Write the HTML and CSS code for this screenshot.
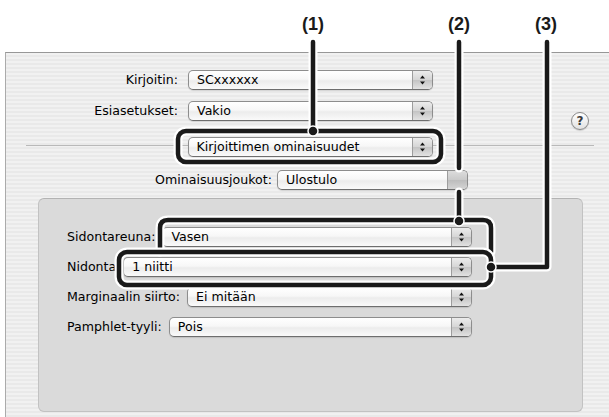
FILE: index.html
```html
<!DOCTYPE html>
<html lang="fi">
<head>
    <meta charset="UTF-8">
    <title>Kirjoittimen ominaisuudet</title>
    <link rel="stylesheet" href="styles.css">
</head>
<body>
<div class="page">

    <div class="marks">
        <span class="mark mark-1">(1)</span>
        <span class="mark mark-2">(2)</span>
        <span class="mark mark-3">(3)</span>
    </div>

    <div class="dialog">
        <div class="row row-top">
            <span class="label label-top">Kirjoitin:</span>
            <div class="popup popup-top">
                <span class="value">SCxxxxxx</span>
                <span class="arrows"><svg width="7" height="12" viewBox="0 0 7 12"><path d="M3.5 1.5 L6 4.5 H1 Z M3.5 10.5 L6 7.5 H1 Z" fill="#111"/></svg></span>
            </div>
        </div>

        <div class="row row-top row-preset">
            <span class="label label-top">Esiasetukset:</span>
            <div class="popup popup-top">
                <span class="value">Vakio</span>
                <span class="arrows"><svg width="7" height="12" viewBox="0 0 7 12"><path d="M3.5 1.5 L6 4.5 H1 Z M3.5 10.5 L6 7.5 H1 Z" fill="#111"/></svg></span>
            </div>
            <span class="help">?</span>
        </div>

        <div class="row row-pane">
            <span class="sep"></span>
            <div class="popup popup-top">
                <span class="value">Kirjoittimen ominaisuudet</span>
                <span class="arrows"><svg width="7" height="12" viewBox="0 0 7 12"><path d="M3.5 1.5 L6 4.5 H1 Z M3.5 10.5 L6 7.5 H1 Z" fill="#111"/></svg></span>
            </div>
            <span class="sep"></span>
        </div>

        <div class="row row-set">
            <span class="label label-set">Ominaisuusjoukot:</span>
            <div class="popup popup-set">
                <span class="value">Ulostulo</span>
                <span class="arrows arrows-blank"></span>
            </div>
        </div>

        <div class="group">
            <div class="row row-inner">
                <span class="label">Sidontareuna:</span>
                <div class="popup popup-inner">
                    <span class="value">Vasen</span>
                    <span class="arrows"><svg width="7" height="12" viewBox="0 0 7 12"><path d="M3.5 1.5 L6 4.5 H1 Z M3.5 10.5 L6 7.5 H1 Z" fill="#111"/></svg></span>
                </div>
            </div>
            <div class="row row-inner">
                <span class="label">Nidonta</span>
                <div class="popup popup-inner">
                    <span class="value">1 niitti</span>
                    <span class="arrows"><svg width="7" height="12" viewBox="0 0 7 12"><path d="M3.5 1.5 L6 4.5 H1 Z M3.5 10.5 L6 7.5 H1 Z" fill="#111"/></svg></span>
                </div>
            </div>
            <div class="row row-inner">
                <span class="label">Marginaalin siirto:</span>
                <div class="popup popup-inner">
                    <span class="value">Ei mitään</span>
                    <span class="arrows"><svg width="7" height="12" viewBox="0 0 7 12"><path d="M3.5 1.5 L6 4.5 H1 Z M3.5 10.5 L6 7.5 H1 Z" fill="#111"/></svg></span>
                </div>
            </div>
            <div class="row row-inner">
                <span class="label">Pamphlet-tyyli:</span>
                <div class="popup popup-inner">
                    <span class="value">Pois</span>
                    <span class="arrows"><svg width="7" height="12" viewBox="0 0 7 12"><path d="M3.5 1.5 L6 4.5 H1 Z M3.5 10.5 L6 7.5 H1 Z" fill="#111"/></svg></span>
                </div>
            </div>
        </div>
    </div>

    <!-- callout frames drawn over the dialog -->
    <svg class="callouts" width="609" height="417" viewBox="0 0 609 417">
        <g fill="none" stroke-linejoin="round" stroke-linecap="round">
            <!-- (1) -->
            <rect x="178" y="131" width="263" height="31" rx="8" stroke="#fff" stroke-width="9"/>
            <path d="M313 42 V131" stroke="#fff" stroke-width="9"/>
            <rect x="178" y="131" width="263" height="31" rx="8" stroke="#1a1a1a" stroke-width="4.5"/>
            <path d="M313 42 V131" stroke="#1a1a1a" stroke-width="4.5"/>

            <!-- (2) -->
            <path d="M160 252 V228 Q160 220 168 220 H483 Q491 220 491 228 V252" stroke="#fff" stroke-width="9"/>
            <path d="M459 42 V168 M459 192 V220" stroke="#fff" stroke-width="9"/>
            <path d="M160 252 V228 Q160 220 168 220 H483 Q491 220 491 228 V252" stroke="#1a1a1a" stroke-width="4.5"/>
            <path d="M459 42 V168 M459 192 V220" stroke="#1a1a1a" stroke-width="4.5"/>

            <!-- (3) -->
            <rect x="119" y="252" width="372" height="33" rx="8" stroke="#fff" stroke-width="9"/>
            <path d="M547 42 V267 H491" stroke="#fff" stroke-width="9"/>
            <rect x="119" y="252" width="372" height="33" rx="8" stroke="#1a1a1a" stroke-width="4.5"/>
            <path d="M547 42 V267 H491" stroke="#1a1a1a" stroke-width="4.5"/>
        </g>
        <g fill="#1a1a1a" stroke="#fff" stroke-width="1.5">
            <circle cx="313" cy="131" r="5"/>
            <circle cx="459" cy="221" r="5"/>
            <circle cx="491" cy="267" r="5"/>
        </g>
    </svg>

</div>
</body>
</html>
```

FILE: styles.css
```css
body {
    margin: 0;
    background: #ffffff;
    font-family: "DejaVu Sans", "Liberation Sans", sans-serif;
    font-size: 12.6px;
    color: #000000;
}
.page {
    position: relative;
    width: 609px;
    height: 417px;
    overflow: hidden;
}

/* callout numbers */
.marks {
    display: flex;
    height: 52px;
    box-sizing: border-box;
    padding: 14px 0 0 298px;
    font-family: "Liberation Sans", Arial, sans-serif;
    font-weight: bold;
    font-size: 18px;
    line-height: 20px;
    color: #1a1a1a;
}
.mark {
    width: 30px;
    text-align: center;
}
.mark-2 {
    margin-left: 116px;
}
.mark-3 {
    margin-left: 57px;
}
.callouts {
    position: absolute;
    left: 0;
    top: 0;
    pointer-events: none;
}

/* dialog sheet */
.dialog {
    margin-left: 5px;
    height: 365px;
    box-sizing: border-box;
    border-top: 1px solid #979797;
    border-left: 1px solid #ababab;
    padding-top: 17px;
    background: repeating-linear-gradient(to bottom, #f1f1f1 0, #f1f1f1 2px, #e9e9e9 2px, #e9e9e9 4px);
}
.row {
    display: flex;
    align-items: flex-start;
    height: 20px;
}
.label {
    line-height: 20px;
    white-space: nowrap;
}
.label-top {
    width: 172px;
    text-align: right;
    margin-right: 10px;
}
.row-preset {
    margin-top: 11px;
}
.row-pane {
    margin-top: 16px;
    padding: 0 15px 0 20px;
}
.sep {
    flex: 1;
    height: 1px;
    margin-top: 8px;
    background: #b9b9b9;
}
.row-set {
    margin-top: 13px;
}
.label-set {
    width: 266px;
    text-align: right;
    margin-right: 5px;
}
.help {
    margin: 11px 20px 0 auto;
    width: 18px;
    height: 18px;
    flex-shrink: 0;
    box-sizing: border-box;
    border: 1px solid #8a8a8a;
    border-radius: 50%;
    background: linear-gradient(#ffffff, #e2e2e2);
    box-shadow: 0 1px 1px rgba(0, 0, 0, 0.15);
    font-family: "DejaVu Sans", sans-serif;
    font-size: 12px;
    font-weight: bold;
    line-height: 16px;
    text-align: center;
    color: #3a3a3a;
}

/* pop-up buttons */
.popup {
    display: flex;
    height: 20px;
    box-sizing: border-box;
    border: 1px solid #8d8d8d;
    border-bottom-color: #6e6e6e;
    border-radius: 5px;
    background: linear-gradient(#ffffff 0%, #f7f7f7 45%, #ececec 55%, #fafafa 100%);
    box-shadow: 0 1px 1px rgba(0, 0, 0, 0.12);
    overflow: hidden;
}
.popup-top {
    width: 245px;
}
.popup-set {
    width: 191px;
}
.popup-inner {
    flex: 1;
}
.value {
    flex: 1;
    padding-left: 8px;
    line-height: 18px;
    white-space: nowrap;
}
.arrows {
    display: flex;
    align-items: center;
    justify-content: center;
    width: 19px;
    border-left: 1px solid #9d9d9d;
    background: linear-gradient(#ececec 0%, #d6d6d6 48%, #c4c4c4 52%, #e2e2e2 100%);
}
.arrows-blank {
    background: linear-gradient(#dcdcdc 0%, #c9c9c9 50%, #bdbdbd 52%, #d4d4d4 100%);
}

/* grouped box */
.group {
    margin: 8px 26px 0 32px;
    height: 214px;
    box-sizing: border-box;
    border: 1px solid #c2c2c2;
    border-top-color: #b3b3b3;
    border-radius: 6px;
    background: #dadada;
    padding: 28px 110px 0 28px;
}
.row-inner {
    margin-bottom: 10px;
}
.row-inner .label {
    margin-right: 7px;
}
```
